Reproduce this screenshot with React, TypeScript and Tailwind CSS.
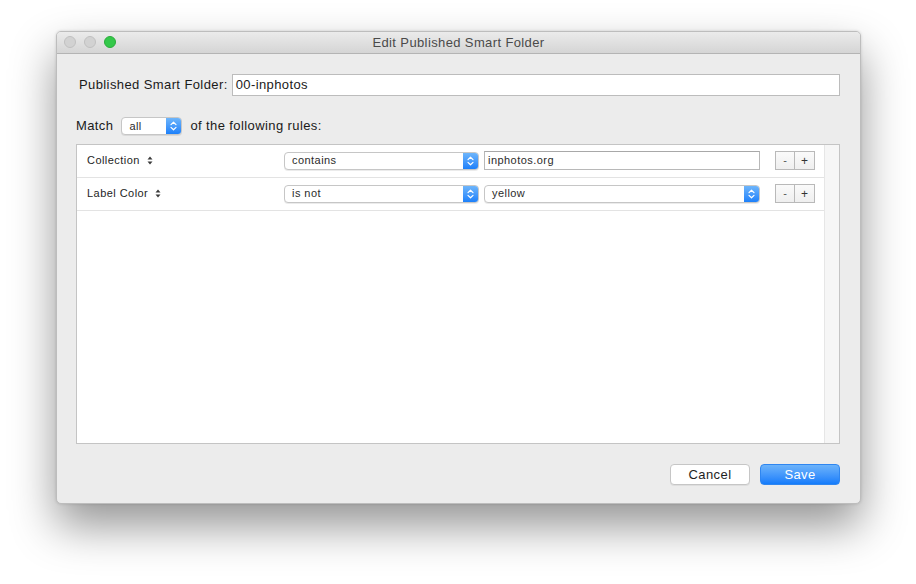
import React from "react";

const font = { fontFamily: '"Liberation Sans", Arial, sans-serif' };

function Chevrons() {
  return (
    <svg width="7" height="10" viewBox="0 0 7 10" fill="none">
      <path d="M1 3.6 L3.5 1.2 L6 3.6" stroke="white" strokeWidth="1.2" strokeLinecap="round" strokeLinejoin="round" />
      <path d="M1 6.4 L3.5 8.8 L6 6.4" stroke="white" strokeWidth="1.2" strokeLinecap="round" strokeLinejoin="round" />
    </svg>
  );
}

function Popup({ text, w }: { text: string; w: string }) {
  return (
    <div className={`${w} h-[18px] flex rounded-[4px] border border-[#c6c6c6] bg-white shadow-[0_1px_0_rgba(0,0,0,0.08)] overflow-hidden`}>
      <div className="flex-1 flex items-center pl-[7px] text-[11px] tracking-[0.45px] text-[#2b2b2b]">{text}</div>
      <div className="w-[15px] flex items-center justify-center bg-gradient-to-b from-[#6db5fb] to-[#1b80fa]">
        <Chevrons />
      </div>
    </div>
  );
}

function SortIcon() {
  return (
    <svg width="6" height="9" viewBox="0 0 6 9" className="ml-[7px]">
      <path d="M0.5 3.5 L3 0.5 L5.5 3.5 Z" fill="#3a3a3a" />
      <path d="M0.5 5.5 L3 8.5 L5.5 5.5 Z" fill="#3a3a3a" />
    </svg>
  );
}

function PlusMinus() {
  return (
    <div className="ml-[15px] flex h-[19px]">
      <div className="w-[20px] h-full flex items-center justify-center border border-[#b9b9b9] bg-gradient-to-b from-[#fafafa] to-[#efefef] text-[11px] text-[#555]">-</div>
      <div className="w-[20px] h-full flex items-center justify-center border border-l-0 border-[#b9b9b9] bg-gradient-to-b from-[#fafafa] to-[#efefef] text-[12px] text-[#333]">+</div>
    </div>
  );
}

function Row({ label, children }: { label: string; children: React.ReactNode }) {
  return (
    <div className="h-[33px] flex items-center border-b border-[#e3e3e3] pb-[1px]">
      <div className="w-[207px] pl-[10px] flex items-center text-[11px] tracking-[0.45px] text-[#1e1e1e]">
        {label}
        <SortIcon />
      </div>
      {children}
      <PlusMinus />
    </div>
  );
}

export default function App() {
  return (
    <div className="w-[916px] h-[584px] bg-white pt-[31px] pl-[56px] overflow-hidden" style={font}>
      <div className="w-[805px] h-[473px] rounded-[5px] bg-[#ececec] border border-[#bdbdbd] shadow-[0_22px_45px_rgba(0,0,0,0.42),0_0_3px_rgba(0,0,0,0.15)] overflow-hidden flex flex-col">
        {/* title bar */}
        <div className="h-[22px] relative flex items-center justify-center bg-gradient-to-b from-[#ebebeb] to-[#d5d5d5] border-b border-[#b4b4b4]">
          <div className="absolute left-[7px] top-[4px] flex gap-[8px]">
            <div className="w-[12px] h-[12px] rounded-full bg-[#d2d2d2] border border-[#c0c0c0]" />
            <div className="w-[12px] h-[12px] rounded-full bg-[#d2d2d2] border border-[#c0c0c0]" />
            <div className="w-[12px] h-[12px] rounded-full bg-[#34c84a] border border-[#2aac3a]" />
          </div>
          <span className="text-[13px] tracking-[0.38px] text-[#4a4a4a]">Edit Published Smart Folder</span>
        </div>

        {/* content */}
        <div className="flex-1 flex flex-col pl-[19px] pr-[20px] pt-[20px]">
          <div className="flex items-center h-[22px]">
            <span className="ml-[3px] text-[13px] tracking-[0.4px] text-[#1a1a1a]">Published Smart Folder:</span>
            <div className="ml-[4px] flex-1 h-[22px] bg-white border border-[#bcbcbc] flex items-center pl-[3px] text-[13px] tracking-[0.4px] text-[#1a1a1a]">
              00-inphotos
            </div>
          </div>

          <div className="mt-[21px] flex items-center h-[18px]">
            <span className="text-[13px] tracking-[0.4px] text-[#1a1a1a]">Match</span>
            <div className="ml-[8px]">
              <Popup text="all" w="w-[61px]" />
            </div>
            <span className="ml-[8px] text-[13px] tracking-[0.4px] text-[#1a1a1a]">of the following rules:</span>
          </div>

          <div className="mt-[9px] h-[300px] bg-white border border-[#c4c4c4] flex">
            <div className="flex-1 flex flex-col">
              <Row label="Collection">
                <Popup text="contains" w="w-[195px]" />
                <div className="ml-[5px] w-[276px] h-[19px] border border-[#b8b8b8] border-t-[#a8a8a8] bg-white flex items-center pl-[3px] text-[11px] tracking-[0.45px] text-[#2b2b2b]">
                  inphotos.org
                </div>
              </Row>
              <Row label="Label Color">
                <Popup text="is not" w="w-[195px]" />
                <div className="ml-[5px]">
                  <Popup text="yellow" w="w-[276px]" />
                </div>
              </Row>
            </div>
            <div className="w-[15px] bg-[#f6f6f6] border-l border-[#e6e6e6]" />
          </div>

          <div className="mt-[20px] flex justify-end gap-[10px]">
            <div className="w-[80px] h-[21px] rounded-[4px] bg-white border border-[#c6c6c6] shadow-[0_1px_0_rgba(0,0,0,0.06)] flex items-center justify-center text-[13px] tracking-[0.4px] text-[#1e1e1e]">
              Cancel
            </div>
            <div className="w-[80px] h-[21px] rounded-[4px] bg-gradient-to-b from-[#6cb3fa] to-[#127cfb] border border-[#2f86f0] flex items-center justify-center text-[13px] tracking-[0.4px] text-white">
              Save
            </div>
          </div>
        </div>
      </div>
    </div>
  );
}
